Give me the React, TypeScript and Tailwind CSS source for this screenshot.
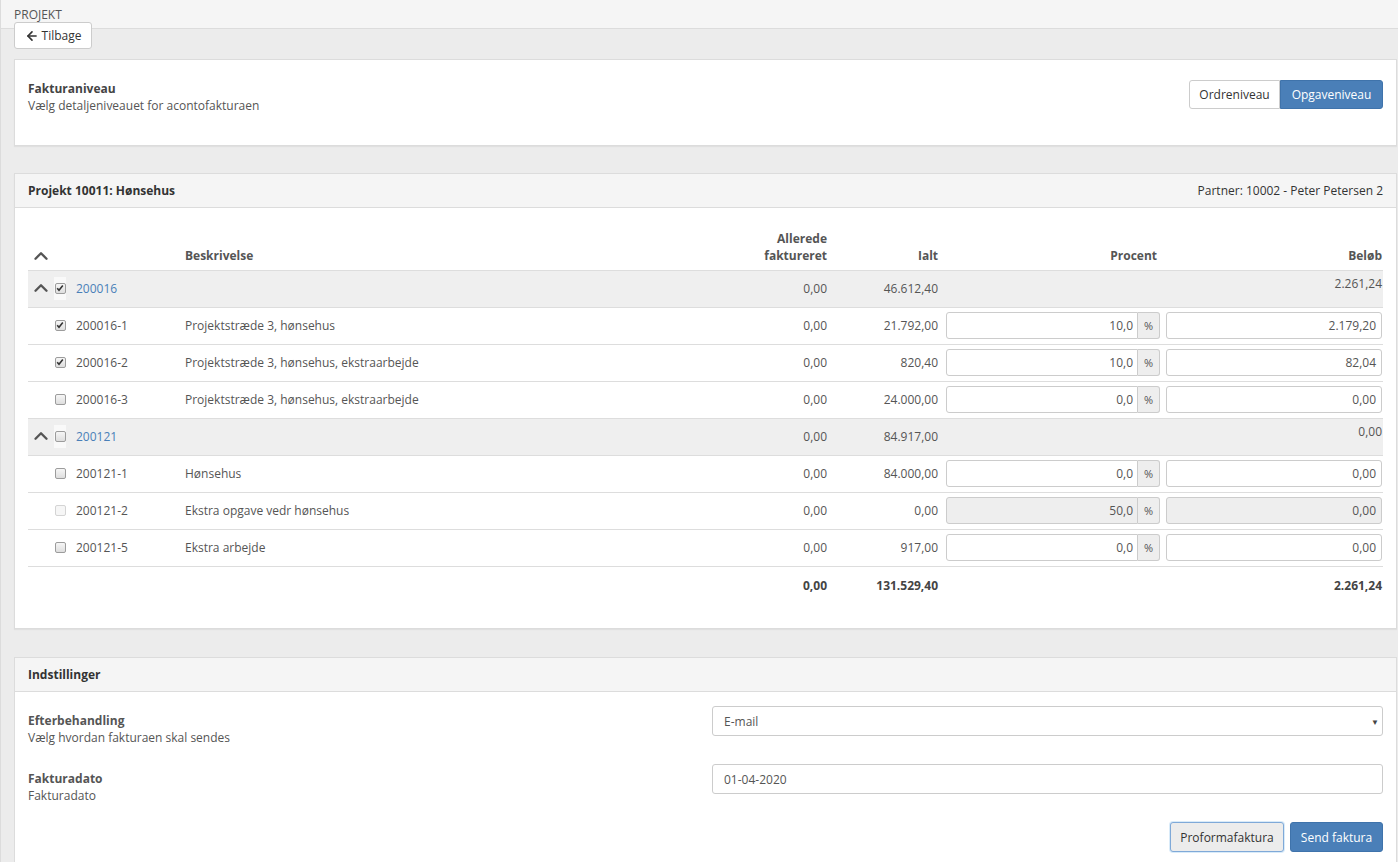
import { ArrowLeft, ChevronUp } from 'lucide-react'

type Row = {
  group?: boolean
  code: string
  desc?: string
  already: string
  total: string
  pct?: string
  amount: string
  checked?: boolean
  disabled?: boolean
}

const rows: Row[] = [
  { group: true, code: '200016', already: '0,00', total: '46.612,40', amount: '2.261,24', checked: true },
  { code: '200016-1', desc: 'Projektstræde 3, hønsehus', already: '0,00', total: '21.792,00', pct: '10,0', amount: '2.179,20', checked: true },
  { code: '200016-2', desc: 'Projektstræde 3, hønsehus, ekstraarbejde', already: '0,00', total: '820,40', pct: '10,0', amount: '82,04', checked: true },
  { code: '200016-3', desc: 'Projektstræde 3, hønsehus, ekstraarbejde', already: '0,00', total: '24.000,00', pct: '0,0', amount: '0,00' },
  { group: true, code: '200121', already: '0,00', total: '84.917,00', amount: '0,00' },
  { code: '200121-1', desc: 'Hønsehus', already: '0,00', total: '84.000,00', pct: '0,0', amount: '0,00' },
  { code: '200121-2', desc: 'Ekstra opgave vedr hønsehus', already: '0,00', total: '0,00', pct: '50,0', amount: '0,00', disabled: true },
  { code: '200121-5', desc: 'Ekstra arbejde', already: '0,00', total: '917,00', pct: '0,0', amount: '0,00' },
]

const cols = 'grid grid-cols-[26px_18px_110px_558px_95px_111px_220px_217px]'

function Check({ checked, disabled }: { checked?: boolean; disabled?: boolean }) {
  return (
    <span className="flex h-[23px] w-[12px] items-center justify-center bg-white/60">
      <span
        className={
          'flex h-[11px] w-[11px] items-center justify-center rounded-[2px] border ' +
          (disabled
            ? 'border-[#d4d4d4] bg-[#f6f6f6]'
            : 'border-[#9c9c9c] bg-gradient-to-b from-[#f6f6f6] to-[#dedede]')
        }
      >
        {checked && (
          <svg width="8" height="8" viewBox="0 0 8 8">
            <path d="M1.2 4.2 3 6.2 6.8 1.6" fill="none" stroke="#333" strokeWidth="1.6" />
          </svg>
        )}
      </span>
    </span>
  )
}

function Chevron() {
  return (
    <span className="flex h-[17px] items-center justify-center">
      <ChevronUp size={22} strokeWidth={2.6} color="#555" />
    </span>
  )
}

export default function App() {
  return (
    <div className="h-[862px] w-full overflow-hidden border-l border-[#dcdcdc] bg-[#ececec] font-['Open_Sans',sans-serif] text-[12px] leading-[17px] text-[#555]">
      {/* Top bar */}
      <div className="flex h-[29px] items-center border-b border-[#dcdcdc] bg-[#f5f5f5] px-[13px] text-[12px] text-[#555]">
        PROJEKT
      </div>

      <div className="pl-[13px] pr-[1px]">
        <button className="relative z-10 -mt-[7px] flex h-[27px] w-[78px] items-center justify-center gap-[3px] rounded-[3px] border border-[#ccc] bg-white text-[12px] text-[#333]">
          <ArrowLeft size={14} strokeWidth={2.8} />
          Tilbage
        </button>

        {/* Fakturaniveau */}
        <div className="mt-[10px] flex h-[87px] justify-between border border-[#dcdcdc] bg-white px-[13px] pt-[20px] shadow-[0_1px_1px_rgba(0,0,0,0.05)]">
          <div>
            <div className="font-bold text-[#444]">Fakturaniveau</div>
            <div>Vælg detaljeniveauet for acontofakturaen</div>
          </div>
          <div className="flex h-[29px]">
            <button className="w-[91px] rounded-l-[3px] border border-[#ccc] bg-white text-[12px] text-[#333]">Ordreniveau</button>
            <button className="w-[103px] rounded-r-[3px] border border-[#3f73ab] bg-[#4a7fb8] text-[12px] text-white">Opgaveniveau</button>
          </div>
        </div>

        {/* Projekt */}
        <div className="mt-[27px] border border-[#dcdcdc] bg-white shadow-[0_1px_1px_rgba(0,0,0,0.05)]">
          <div className="flex h-[34px] items-center justify-between border-b border-[#dcdcdc] bg-[#f5f5f5] px-[13px]">
            <span className="font-bold text-[#333]">Projekt 10011: Hønsehus</span>
            <span className="text-[#333]">Partner: 10002 - Peter Petersen 2</span>
          </div>
          <div className="px-[13px] pb-[25px] pt-[14px]">
            <div className={cols + ' h-[48px] items-end pb-[6px] font-bold text-[#555]'}>
              <Chevron />
              <span />
              <span />
              <span className="pl-[3px]">Beskrivelse</span>
              <span className="pr-[8px] text-right">Allerede<br />faktureret</span>
              <span className="pr-[8px] text-right">Ialt</span>
              <span className="pr-[9px] text-right">Procent</span>
              <span className="pr-[1px] text-right">Beløb</span>
            </div>
            {rows.map((r) => (
              <div
                key={r.code}
                className={cols + ' h-[37px] items-center border-t border-[#dddddd] pb-[2px] ' + (r.group ? 'bg-[#efefef]' : 'bg-white')}
              >
                {r.group ? <Chevron /> : <span />}
                <Check checked={r.checked} disabled={r.disabled} />
                <span className={'pl-[4px] ' + (r.group ? 'text-[#4a7fb8]' : '')}>{r.code}</span>
                <span className="pl-[3px]">{r.desc}</span>
                <span className="pr-[8px] text-right">{r.already}</span>
                <span className="pr-[8px] text-right">{r.total}</span>
                {r.group ? (
                  <>
                    <span />
                    <span className="-mt-[9px] pr-[1px] text-right">{r.amount}</span>
                  </>
                ) : (
                  <>
                    <div className="flex h-[27px] w-[214px]">
                      <div className={'flex flex-1 items-center justify-end rounded-l-[3px] border border-[#ccc] pr-[4px] ' + (r.disabled ? 'bg-[#eeeeee]' : 'bg-white')}>
                        {r.pct}
                      </div>
                      <div className="flex w-[22px] items-center justify-center rounded-r-[3px] border border-l-0 border-[#ccc] bg-[#eeeeee] text-[11px]">%</div>
                    </div>
                    <div className={'flex h-[27px] w-[216px] items-center justify-end rounded-[3px] border border-[#ccc] pr-[5px] ' + (r.disabled ? 'bg-[#eeeeee]' : 'bg-white')}>
                      {r.amount}
                    </div>
                  </>
                )}
              </div>
            ))}
            <div className={cols + ' h-[37px] items-center border-t border-[#dddddd] font-bold text-[#444]'}>
              <span />
              <span />
              <span />
              <span />
              <span className="pr-[8px] text-right">0,00</span>
              <span className="pr-[8px] text-right">131.529,40</span>
              <span />
              <span className="pr-[1px] text-right">2.261,24</span>
            </div>
          </div>
        </div>

        {/* Indstillinger */}
        <div className="mt-[28px] border border-[#dcdcdc] bg-white">
          <div className="flex h-[34px] items-center border-b border-[#dcdcdc] bg-[#f5f5f5] px-[13px]">
            <span className="font-bold text-[#333]">Indstillinger</span>
          </div>
          <div className="px-[13px] pb-[14px] pt-[14px]">
            <div className="grid grid-cols-[684px_1fr] items-start">
              <div className="pt-[6px]">
                <div className="font-bold text-[#555]">Efterbehandling</div>
                <div>Vælg hvordan fakturaen skal sendes</div>
              </div>
              <div className="flex h-[30px] items-center justify-between rounded-[3px] border border-[#ccc] bg-white pl-[11px] pr-[3px] text-[#555]">
                <span>E-mail</span>
                <span className="text-[8px] text-[#444]">▼</span>
              </div>
            </div>
            <div className="mt-[18px] grid grid-cols-[684px_1fr] items-start">
              <div className="pt-[6px]">
                <div className="font-bold text-[#555]">Fakturadato</div>
                <div>Fakturadato</div>
              </div>
              <div className="flex h-[30px] items-center rounded-[3px] border border-[#ccc] bg-white pl-[11px] text-[#555]">
                01-04-2020
              </div>
            </div>
            <div className="mt-[18px] flex justify-end gap-[6px]">
              <button className="h-[30px] w-[114px] rounded-[3px] border border-[#7fa9d8] bg-[#ececec] text-[12px] text-[#333] shadow-[0_0_0_1px_rgba(102,175,233,0.25)]">
                Proformafaktura
              </button>
              <button className="h-[30px] w-[93px] rounded-[3px] border border-[#3f73ab] bg-[#4a7fb8] text-[12px] text-white">
                Send faktura
              </button>
            </div>
          </div>
        </div>
      </div>
    </div>
  )
}
